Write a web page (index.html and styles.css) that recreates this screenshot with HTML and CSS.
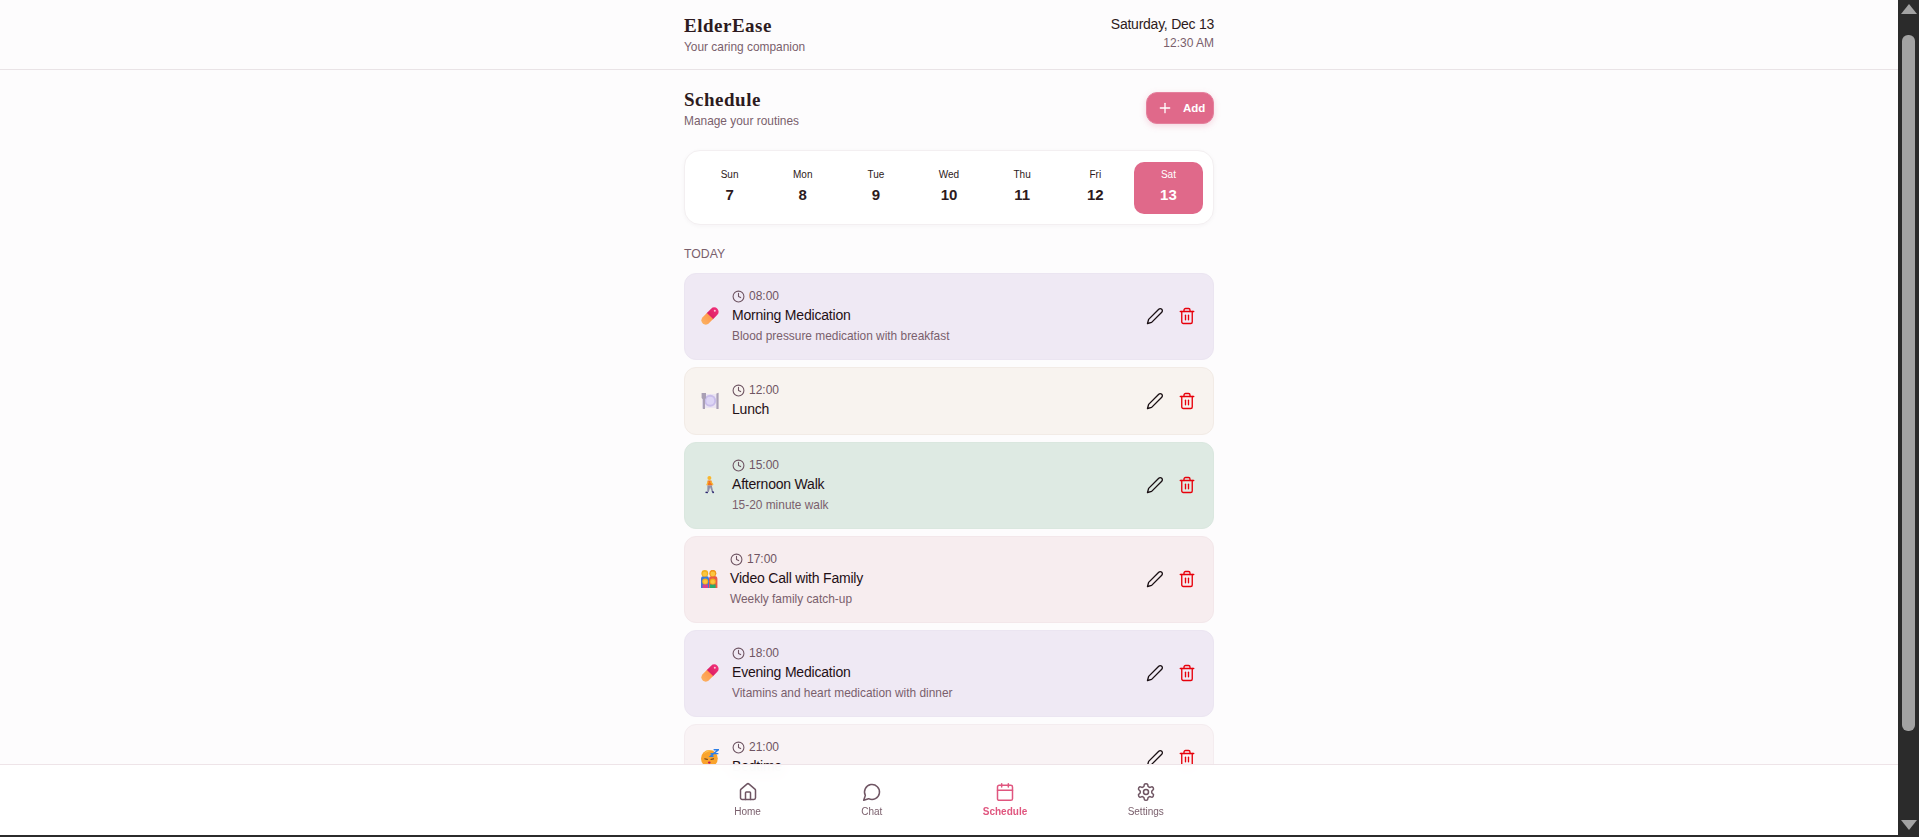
FILE: index.html
```html
<!DOCTYPE html>
<html lang="en">
<head>
    <meta charset="UTF-8">
    <meta name="viewport" content="width=device-width, initial-scale=1.0">
    <title>ElderEase</title>
    <link rel="stylesheet" href="styles.css">
</head>
<body>
    <!-- Shared icons -->
    <svg class="sprite" aria-hidden="true">
        <defs>
            <linearGradient id="pillTop" x1="0" y1="0" x2="0" y2="1">
                <stop offset="0" stop-color="#f0307a"/>
                <stop offset="1" stop-color="#dc1f62"/>
            </linearGradient>
            <linearGradient id="pillBottom" x1="0" y1="0" x2="0" y2="1">
                <stop offset="0" stop-color="#ff9a4d"/>
                <stop offset="1" stop-color="#fbb060"/>
            </linearGradient>
        </defs>
        <symbol id="i-clock" viewBox="0 0 24 24"><circle cx="12" cy="12" r="10"/><path d="M12 6v6l4 2"/></symbol>
        <symbol id="i-edit" viewBox="0 0 24 24"><path d="M17 3a2.828 2.828 0 1 1 4 4L7.5 20.5 2 22l1.5-5.5L17 3z"/></symbol>
        <symbol id="i-trash" viewBox="0 0 24 24"><path d="M3 6h18"/><path d="M19 6v14c0 1-1 2-2 2H7c-1 0-2-1-2-2V6"/><path d="M8 6V4c0-1 1-2 2-2h4c1 0 2 1 2 2v2"/><path d="M10 11v6"/><path d="M14 11v6"/></symbol>
        <symbol id="e-pill" viewBox="0 0 18 18">
            <g transform="rotate(45 9 9)">
                <path d="M4.600 9.500V3a4.400 4.400 0 0 1 8.800 0v6.500z" fill="url(#pillTop)"/>
                <path d="M4.600 9h8.800v6a4.400 4.400 0 0 1-8.800 0z" fill="url(#pillBottom)"/>
            </g>
            <circle cx="13.800" cy="3.800" r="1" fill="#ffc4d8"/>
        </symbol>
        <symbol id="e-plate" viewBox="0 0 18 18">
            <rect x="1" y="2" width="16" height="14" fill="#ece5f2"/>
            <circle cx="9.200" cy="8.800" r="6" fill="#c9bdea"/>
            <circle cx="9.200" cy="8.800" r="4" fill="#ddd5f5"/>
            <path d="M0.600 1h4.400v5l-1 1.200v9.800h-2.200v-9.800l-1.200-1.200z" fill="#a99fb5"/>
            <path d="M15.400 1.600l2.200-.8v16.200h-2.200z" fill="#a99fb5"/>
        </symbol>
        <symbol id="e-walk" viewBox="0 0 18 18">
            <circle cx="8.400" cy="2" r="2" fill="#f8b62e"/>
            <path d="M6.600 4.600h3.800l1.200 4.800H6.400z" fill="#f4711f"/>
            <path d="M10 5l2.600 3.400-1 .7-2.600-3.200z" fill="#f8b62e"/>
            <path d="M6.800 5.200l-1.600 3.800 1 .4 1.700-3.600z" fill="#f8b62e"/>
            <path d="M6.400 9.400h4.400l1.400 6-1.400.3-1.700-4.400-1.300 4.700-1.500-.3z" fill="#8f8fa8"/>
            <path d="M4.800 15.600l2.200.3-.2 1.400-2.500-.4z" fill="#2a2570"/>
            <path d="M10.700 15.500l1.600-.4.900 1.800-1.500.3z" fill="#2a2570"/>
        </symbol>
        <symbol id="e-family" viewBox="0 0 18 18">
            <path d="M1 18V9a3 3 0 0 1 3-3h2a3 3 0 0 1 3 3v9z" fill="#3b7ad9"/>
            <path d="M9 18V9a3 3 0 0 1 3-3h2.400a3 3 0 0 1 3 3v9z" fill="#ea5a44"/>
            <circle cx="4.800" cy="3.400" r="3.400" fill="#f2b01e"/>
            <circle cx="4.800" cy="4" r="2.300" fill="#fbc63e"/>
            <circle cx="12.800" cy="3.300" r="3.500" fill="#f0981c"/>
            <circle cx="12.800" cy="3.900" r="2.400" fill="#fbc63e"/>
            <path d="M2.600 18v-3.600h5.400V18z" fill="#d93f8e"/>
            <path d="M10 18v-3.600h5.600V18z" fill="#28ab6c"/>
            <circle cx="5.200" cy="11.400" r="3" fill="#f2b01e"/>
            <circle cx="5.200" cy="11.800" r="2" fill="#fbc63e"/>
            <circle cx="12.800" cy="11.400" r="3" fill="#f2b01e"/>
            <circle cx="12.800" cy="11.800" r="2" fill="#fbc63e"/>
        </symbol>
        <symbol id="e-sleep" viewBox="0 0 18 18">
            <circle cx="8.400" cy="9.400" r="8.400" fill="#f9a32c"/>
            <path d="M2.400 5.200a8.400 8.400 0 0 1 9.600-3.400c-3 .3-7 1-9.600 3.400z" fill="#fcc250"/>
            <path d="M3.400 9.800l3.400.6M9.600 10.400l3.400-.6" stroke="#5a3418" stroke-width="1" fill="none"/>
            <ellipse cx="8.300" cy="13.600" rx="1.400" ry="1.100" fill="#c2185b"/>
            <path d="M9.500 4.600h3l-3 2.600h3M12.600 0.800h4.800l-4.800 3.800h4.800" stroke="#2f7fe6" stroke-width="1.400" fill="none"/>
        </symbol>
    </svg>

    <div class="desktop">
        <div class="page">
            <div class="scroller">
                <header class="topbar">
                    <div class="topbar-inner">
                        <div>
                            <div class="brand">ElderEase</div>
                            <div class="tagline">Your caring companion</div>
                        </div>
                        <div class="clock">
                            <div class="clock-date">Saturday, Dec 13</div>
                            <div class="clock-time">12:30 AM</div>
                        </div>
                    </div>
                </header>

                <main class="content">
                    <div class="heading">
                        <div>
                            <h1>Schedule</h1>
                            <p class="tagline subtitle">Manage your routines</p>
                        </div>
                        <button class="add-btn" type="button">
                            <svg class="add-icon" viewBox="0 0 24 24"><path d="M5 12h14"/><path d="M12 5v14"/></svg>
                            Add
                        </button>
                    </div>

                    <!-- Week strip -->
                    <div class="week">
                        <div class="day"><span class="day-name">Sun</span><span class="day-num">7</span></div>
                        <div class="day"><span class="day-name">Mon</span><span class="day-num">8</span></div>
                        <div class="day"><span class="day-name">Tue</span><span class="day-num">9</span></div>
                        <div class="day"><span class="day-name">Wed</span><span class="day-num">10</span></div>
                        <div class="day"><span class="day-name">Thu</span><span class="day-num">11</span></div>
                        <div class="day"><span class="day-name">Fri</span><span class="day-num">12</span></div>
                        <div class="day active"><span class="day-name">Sat</span><span class="day-num">13</span></div>
                    </div>

                    <h2 class="section-title">Today</h2>

                    <div class="routines">
                        <div class="routine lavender">
                            <svg class="emoji"><use href="#e-pill"/></svg>
                            <div class="routine-body">
                                <div class="routine-time"><svg class="clock-icon"><use href="#i-clock"/></svg>08:00</div>
                                <div class="routine-title">Morning Medication</div>
                                <div class="routine-desc">Blood pressure medication with breakfast</div>
                            </div>
                            <svg class="action edit"><use href="#i-edit"/></svg>
                            <svg class="action trash"><use href="#i-trash"/></svg>
                        </div>
                        <div class="routine cream">
                            <svg class="emoji"><use href="#e-plate"/></svg>
                            <div class="routine-body">
                                <div class="routine-time"><svg class="clock-icon"><use href="#i-clock"/></svg>12:00</div>
                                <div class="routine-title">Lunch</div>
                            </div>
                            <svg class="action edit"><use href="#i-edit"/></svg>
                            <svg class="action trash"><use href="#i-trash"/></svg>
                        </div>
                        <div class="routine green">
                            <svg class="emoji"><use href="#e-walk"/></svg>
                            <div class="routine-body">
                                <div class="routine-time"><svg class="clock-icon"><use href="#i-clock"/></svg>15:00</div>
                                <div class="routine-title">Afternoon Walk</div>
                                <div class="routine-desc">15-20 minute walk</div>
                            </div>
                            <svg class="action edit"><use href="#i-edit"/></svg>
                            <svg class="action trash"><use href="#i-trash"/></svg>
                        </div>
                        <div class="routine rose">
                            <svg class="emoji wide"><use href="#e-family"/></svg>
                            <div class="routine-body">
                                <div class="routine-time"><svg class="clock-icon"><use href="#i-clock"/></svg>17:00</div>
                                <div class="routine-title">Video Call with Family</div>
                                <div class="routine-desc">Weekly family catch-up</div>
                            </div>
                            <svg class="action edit"><use href="#i-edit"/></svg>
                            <svg class="action trash"><use href="#i-trash"/></svg>
                        </div>
                        <div class="routine lavender">
                            <svg class="emoji"><use href="#e-pill"/></svg>
                            <div class="routine-body">
                                <div class="routine-time"><svg class="clock-icon"><use href="#i-clock"/></svg>18:00</div>
                                <div class="routine-title">Evening Medication</div>
                                <div class="routine-desc">Vitamins and heart medication with dinner</div>
                            </div>
                            <svg class="action edit"><use href="#i-edit"/></svg>
                            <svg class="action trash"><use href="#i-trash"/></svg>
                        </div>
                        <div class="routine blush">
                            <svg class="emoji"><use href="#e-sleep"/></svg>
                            <div class="routine-body">
                                <div class="routine-time"><svg class="clock-icon"><use href="#i-clock"/></svg>21:00</div>
                                <div class="routine-title">Bedtime</div>
                            </div>
                            <svg class="action edit"><use href="#i-edit"/></svg>
                            <svg class="action trash"><use href="#i-trash"/></svg>
                        </div>
                    </div>
                </main>
            </div>

            <!-- Bottom navigation sits over the list -->
            <nav class="bottom-nav">
                <div class="nav-inner">
                    <a class="nav-item">
                        <svg class="nav-icon" viewBox="0 0 24 24"><path d="M3 10a2 2 0 0 1 .709-1.528l7-5.999a2 2 0 0 1 2.582 0l7 5.999A2 2 0 0 1 21 10v9a2 2 0 0 1-2 2H5a2 2 0 0 1-2-2z"/><path d="M15 21v-8a1 1 0 0 0-1-1h-4a1 1 0 0 0-1 1v8"/></svg>
                        Home
                    </a>
                    <a class="nav-item">
                        <svg class="nav-icon" viewBox="0 0 24 24"><path d="M7.900 20A9 9 0 1 0 4 16.100L2 22Z"/></svg>
                        Chat
                    </a>
                    <a class="nav-item current">
                        <svg class="nav-icon" viewBox="0 0 24 24"><path d="M8 2v4"/><path d="M16 2v4"/><rect x="3" y="4" width="18" height="18" rx="2"/><path d="M3 10h18"/></svg>
                        Schedule
                    </a>
                    <a class="nav-item">
                        <svg class="nav-icon" viewBox="0 0 24 24"><path d="M12.220 2h-.44a2 2 0 0 0-2 2v.18a2 2 0 0 1-1 1.730l-.43.25a2 2 0 0 1-2 0l-.15-.08a2 2 0 0 0-2.730.730l-.22.38a2 2 0 0 0 .730 2.730l.15.1a2 2 0 0 1 1 1.720v.51a2 2 0 0 1-1 1.740l-.15.09a2 2 0 0 0-.730 2.730l.22.38a2 2 0 0 0 2.730.730l.15-.08a2 2 0 0 1 2 0l.43.25a2 2 0 0 1 1 1.730V20a2 2 0 0 0 2 2h.44a2 2 0 0 0 2-2v-.18a2 2 0 0 1 1-1.730l.43-.25a2 2 0 0 1 2 0l.15.08a2 2 0 0 0 2.730-.730l.22-.39a2 2 0 0 0-.730-2.730l-.15-.08a2 2 0 0 1-1-1.740v-.5a2 2 0 0 1 1-1.740l.15-.09a2 2 0 0 0 .730-2.730l-.22-.38a2 2 0 0 0-2.730-.730l-.15.08a2 2 0 0 1-2 0l-.43-.25a2 2 0 0 1-1-1.730V4a2 2 0 0 0-2-2z"/><circle cx="12" cy="12" r="3"/></svg>
                        Settings
                    </a>
                </div>
            </nav>

            <!-- Browser scrollbar -->
            <div class="scrollbar">
                <div class="arrow up"></div>
                <div class="thumb"></div>
                <div class="arrow down"></div>
            </div>
        </div>
        <div class="window-edge"></div>
    </div>
</body>
</html>
```

FILE: styles.css
```css
* {
    box-sizing: border-box;
}

html, body {
    height: 100%;
    margin: 0;
    overflow: hidden;
}

body {
    font-family: "Liberation Sans", Arial, sans-serif;
    color: #1f1016;
    background-color: #fdfcfd;
}

.sprite {
    width: 0;
    height: 0;
    position: absolute;
}

.desktop {
    height: 100%;
    display: flex;
    flex-direction: column;
}

.page {
    flex: 1;
    min-height: 0;
    display: flex;
    position: relative;
}

.scroller {
    flex: 1;
    min-width: 0;
    overflow: hidden;
}

/* Header */
.topbar {
    height: 70px;
    border-bottom: 1px solid #e9e3e6;
}

.topbar-inner {
    width: 530px;
    margin: 0 auto;
    padding-top: 14px;
    display: flex;
    justify-content: space-between;
}

.brand, h1 {
    font-family: "Liberation Serif", "Times New Roman", serif;
    font-weight: bold;
    font-size: 19px;
    line-height: 23px;
    letter-spacing: 0.5px;
    color: #2d1a20;
}

h1 {
    margin: 0;
}

.tagline {
    margin: 0;
    margin-top: 3px;
    font-size: 11.9px;
    line-height: 14px;
    color: #7a5f6c;
}

.clock {
    text-align: right;
    padding-top: 2px;
}

.clock-date {
    font-size: 14px;
    line-height: 16px;
    letter-spacing: -0.25px;
    color: #2d1a20;
}

.clock-time {
    margin-top: 4px;
    font-size: 12px;
    line-height: 14px;
    color: #7a5f6c;
}

/* Main column */
.content {
    width: 530px;
    margin: 0 auto;
    padding-top: 18px;
}

.heading {
    display: flex;
    justify-content: space-between;
    align-items: flex-start;
}

.add-btn {
    width: 68px;
    height: 32px;
    margin-top: 4px;
    padding: 0 0 0 10px;
    display: flex;
    align-items: center;
    gap: 10px;
    border: 1px solid #e5809d;
    border-radius: 11px;
    background-color: #e0698a;
    color: white;
    font-family: inherit;
    font-size: 11.5px;
    font-weight: bold;
    box-shadow: 0 2px 6px rgba(224, 105, 138, 0.25);
}

.add-icon {
    width: 16px;
    height: 16px;
    fill: none;
    stroke: white;
    stroke-width: 2;
    stroke-linecap: round;
}

/* Week strip */
.week {
    margin-top: 22px;
    padding: 11px 10px 10px;
    display: grid;
    grid-template-columns: repeat(7, 1fr);
    gap: 4px;
    background-color: white;
    border: 1px solid #f3eff1;
    border-radius: 16px;
    box-shadow: 0 1px 4px rgba(60, 30, 45, 0.04);
}

.day {
    height: 52px;
    padding-top: 7px;
    display: flex;
    flex-direction: column;
    align-items: center;
    border-radius: 10px;
    color: #2d1a20;
}

.day-name {
    font-size: 10px;
    line-height: 12px;
}

.day-num {
    margin-top: 5px;
    font-size: 15px;
    line-height: 18px;
    font-weight: bold;
}

.day.active {
    background-color: #e0698a;
    color: white;
}

.section-title {
    margin: 22px 0 0;
    font-size: 12.25px;
    line-height: 14px;
    font-weight: normal;
    text-transform: uppercase;
    color: #7a5f6c;
}

/* Routine cards */
.routines {
    margin-top: 12px;
    display: flex;
    flex-direction: column;
    gap: 7px;
}

.routine {
    padding: 15px 17px 16px 16px;
    display: flex;
    align-items: center;
    border: 1px solid transparent;
    border-radius: 12px;
}

.lavender {
    background-color: #efe9f4;
    border-color: #ebe5f1;
}

.cream {
    background-color: #f8f3ef;
    border-color: #f2ebe6;
}

.green {
    background-color: #deeae3;
    border-color: #dae7df;
}

.rose {
    background-color: #f7edef;
    border-color: #f3e7ea;
}

.blush {
    background-color: #f9f3f5;
    border-color: #f4ecef;
}

.emoji {
    width: 18px;
    height: 18px;
    margin-right: 13px;
    flex-shrink: 0;
}

.emoji.wide {
    margin-right: 12px;
    margin-left: -1px;
}

.routine-body {
    flex: 1;
    min-width: 0;
}

.routine-time {
    display: flex;
    align-items: center;
    gap: 4px;
    font-size: 12px;
    line-height: 14px;
    color: #6f5563;
}

.clock-icon {
    width: 13px;
    height: 13px;
    fill: none;
    stroke: #6f5563;
    stroke-width: 2;
    stroke-linecap: round;
    stroke-linejoin: round;
}

.routine-title {
    margin-top: 3px;
    font-size: 14px;
    line-height: 18px;
    letter-spacing: -0.2px;
    color: #1f1016;
}

.routine-desc {
    margin-top: 5px;
    font-size: 11.9px;
    line-height: 14px;
    color: #7a5f6c;
}

.action {
    width: 18px;
    height: 18px;
    flex-shrink: 0;
    fill: none;
    stroke-width: 1.8;
    stroke-linecap: round;
    stroke-linejoin: round;
}

.edit {
    stroke: #1a1014;
    margin-right: 14px;
}

.trash {
    stroke: #e7000b;
}

/* Bottom nav */
.bottom-nav {
    position: absolute;
    left: 0;
    right: 21px;
    bottom: 0;
    height: 71px;
    border-top: 1px solid #eee4e8;
    background-color: rgba(255, 255, 255, 0.95);
    backdrop-filter: blur(8px);
}

.nav-inner {
    width: 530px;
    margin: 0 auto;
    padding-top: 17px;
    display: flex;
    justify-content: space-around;
}

.nav-item {
    display: flex;
    flex-direction: column;
    align-items: center;
    gap: 4px;
    font-size: 10px;
    line-height: 12px;
    color: #7a5f6c;
}

.nav-item.current {
    color: #e0567f;
    font-weight: bold;
}

.nav-icon {
    width: 20px;
    height: 20px;
    fill: none;
    stroke: #6f5563;
    stroke-width: 1.8;
    stroke-linecap: round;
    stroke-linejoin: round;
}

.current .nav-icon {
    stroke: #e0567f;
}

/* Scrollbar */
.scrollbar {
    width: 21px;
    flex-shrink: 0;
    padding: 4px 0 5px;
    display: flex;
    flex-direction: column;
    align-items: center;
    background-color: #2b2b2b;
    position: relative;
    z-index: 1;
}

.arrow {
    width: 0;
    height: 0;
    border-left: 8px solid transparent;
    border-right: 8px solid transparent;
}

.arrow.up {
    border-bottom: 10px solid #a3a3a3;
}

.arrow.down {
    border-top: 10px solid #a3a3a3;
}

.thumb {
    width: 13px;
    height: 696px;
    margin: 21px 0 auto;
    border-radius: 6px;
    background-color: #a3a3a3;
}

.window-edge {
    height: 2px;
    background-color: #2b2b2b;
}
```
